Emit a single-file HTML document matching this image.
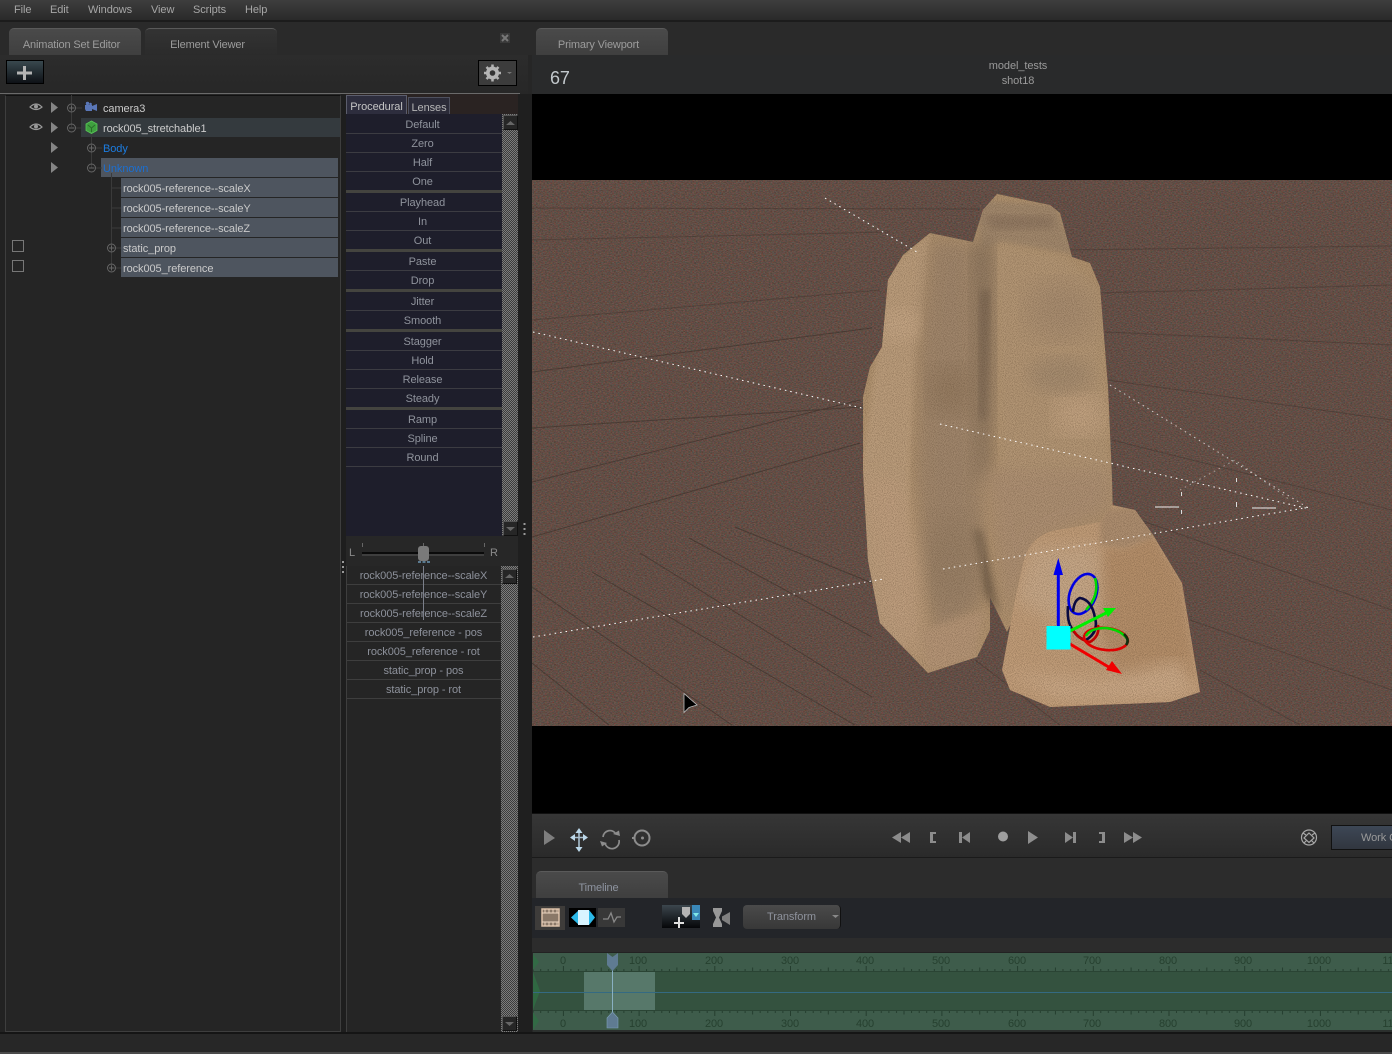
<!DOCTYPE html>
<html>
<head>
<meta charset="utf-8">
<style>
html,body{margin:0;padding:0;background:#252525;}
#p{position:relative;width:1392px;height:1054px;overflow:hidden;background:#262626;font-family:"Liberation Sans",sans-serif;font-size:11px;letter-spacing:-.08px;color:#a0a0a0;}
#p div{position:absolute;}
.t{white-space:nowrap;line-height:14px;height:14px;}
.c{text-align:center;}
.m{color:#a6a6a6;top:2px;}
.tab{border-radius:5px 5px 0 0;background:linear-gradient(#4a4a4a,#3f3f3f);height:27px;width:132px;border-top:1px solid #5a5a5a;box-sizing:border-box;padding-right:7px;text-align:center;line-height:32px;color:#9c9c9c;letter-spacing:-.15px;}
.sel{background:#4e555f;height:19px;}
.tr{color:#cacaca;left:123px;}
.r{left:346px;width:153px;color:#8f939c;text-align:center;line-height:14px;height:14px;}
.sep{left:346px;width:156px;height:1px;background:#3c3c42;}
.gs{left:346px;width:156px;height:3px;background:#44443f;}
.l{left:346px;width:155px;color:#8d919b;text-align:center;line-height:14px;height:14px;}
.ls{left:346px;width:155px;height:1px;background:#3e3e3e;}
.chk{background-color:#5c5c5c;background-image:repeating-conic-gradient(#3b3b3b 0 25%,#7c7c7c 0 50%);background-size:2px 2px;}
.btn{background:#262626;border:1px solid #555;border-right-color:#111;border-bottom-color:#111;box-sizing:border-box;width:15px;height:15px;}
.num{color:#26402f;font-size:11px;width:40px;text-align:center;line-height:12px;height:12px;}
svg{position:absolute;display:block;}
</style>
</head>
<body>
<div id="p">
<!-- menu -->
<div style="left:0;top:0;width:1392px;height:20px;background:linear-gradient(#3e3e3e,#2a2a2a);"></div>
<div style="left:0;top:20px;width:1392px;height:2px;background:#1c1c1c;"></div>
<div class="t m" style="left:14px;top:3px;">File</div>
<div class="t m" style="left:50px;top:3px;">Edit</div>
<div class="t m" style="left:88px;top:3px;">Windows</div>
<div class="t m" style="left:151px;top:3px;">View</div>
<div class="t m" style="left:193px;top:3px;">Scripts</div>
<div class="t m" style="left:245px;top:3px;">Help</div>

<!-- left panel head -->
<div style="left:0;top:22px;width:528px;height:33px;background:#2a2a2a;"></div>
<div style="left:0;top:55px;width:528px;height:39px;background:linear-gradient(#2c2c2c,#272727);"></div>
<div style="left:0;top:93px;width:520px;height:1px;background:#6a6a6a;"></div>
<div class="tab" style="left:9px;top:28px;">Animation Set Editor</div>
<div class="tab" style="left:145px;top:28px;background:linear-gradient(#333,#2b2b2b);">Element Viewer</div>
<svg style="left:500px;top:33px;" width="10" height="10"><rect width="10" height="10" fill="#3a3a3a"/><path d="M2 2L8 8M8 2L2 8" stroke="#777" stroke-width="2"/></svg>
<div style="left:6px;top:60px;width:38px;height:24px;background:linear-gradient(#39484e,#0e1116);border:1px solid #000;box-sizing:border-box;"></div>
<svg style="left:6px;top:60px;" width="38" height="24"><path d="M18.500 6V20M11 13H26" stroke="#b4b4b4" stroke-width="3"/></svg>
<div style="left:478px;top:60px;width:39px;height:26px;background:#3c3c3c;border:1px solid #000;box-sizing:border-box;"></div>
<svg style="left:483px;top:63px;" width="30" height="20"><g fill="#b4b4b4"><circle cx="9.500" cy="10" r="6.500"/><g stroke="#b4b4b4" stroke-width="2.500"><path d="M9.500 1.500V18.500M1 10H18M3.500 4L15.500 16M15.500 4L3.500 16"/></g></g><circle cx="9.500" cy="10" r="2.800" fill="#333"/><path d="M24 9H29L26.500 11Z" fill="#777"/></svg>

<!-- tree panel -->
<div style="left:0;top:94px;width:5px;height:940px;background:#222;"></div>
<div style="left:5px;top:95px;width:336px;height:937px;background:#252525;border:1px solid #3e3e3e;border-top-color:#111;box-sizing:border-box;"></div>
<div style="left:341px;top:94px;width:5px;height:940px;background:#1e1e1e;"></div>
<div style="left:81px;top:118px;width:259px;height:19px;background:#343a3e;"></div>
<div class="sel" style="left:101px;top:158px;width:237px;"></div>
<div class="sel" style="left:121px;top:178px;width:217px;"></div>
<div class="sel" style="left:121px;top:198px;width:217px;"></div>
<div class="sel" style="left:121px;top:218px;width:217px;"></div>
<div class="sel" style="left:121px;top:238px;width:217px;"></div>
<div class="sel" style="left:121px;top:258px;width:217px;"></div>

<svg style="left:0;top:95px;" width="130" height="185">
 <g stroke="#3a3a3a" fill="none">
  <path d="M71.500 0V32M71.500 13H82M71.500 33H82"/>
  <path d="M91.500 38V73M91.500 53H102M91.500 73H102"/>
  <path d="M111.500 78V173M111.500 93H121M111.500 113H121M111.500 133H121M111.500 153H121M111.500 173H121"/>
 </g>
 <g fill="none" stroke="#666">
  <circle cx="71.500" cy="13" r="4"/><path d="M69 13H74M71.500 10.500V15.500"/>
  <circle cx="71.500" cy="33" r="4"/><path d="M69 33H74"/>
  <circle cx="91.500" cy="53" r="4"/><path d="M89 53H94M91.500 50.500V55.500"/>
  <circle cx="91.500" cy="73" r="4"/><path d="M89 73H94"/>
  <circle cx="111.500" cy="153" r="4"/><path d="M109 153H114M111.500 150.500V155.500"/>
  <circle cx="111.500" cy="173" r="4"/><path d="M109 173H114M111.500 170.500V175.500"/>
 </g>
 <g fill="#858585">
  <path d="M51 7L58 12.500L51 18Z"/><path d="M51 27L58 32.500L51 38Z"/><path d="M51 47L58 52.500L51 58Z"/><path d="M51 67L58 72.500L51 78Z"/>
 </g>
 <g>
  <path d="M30 12Q36 6 42 12Q36 17 30 12Z" fill="none" stroke="#999" stroke-width="1.200"/><circle cx="36" cy="11.500" r="2" fill="#999"/>
  <path d="M30 32Q36 26 42 32Q36 37 30 32Z" fill="none" stroke="#999" stroke-width="1.200"/><circle cx="36" cy="31.500" r="2" fill="#999"/>
 </g>
 <rect x="12.500" y="145.500" width="11" height="11" fill="none" stroke="#777"/>
 <rect x="12.500" y="165.500" width="11" height="11" fill="none" stroke="#777"/>
 <path d="M85 10H92V11L97 9V16L92 14V16H86L85 14Z" fill="#5a77b8"/><circle cx="87.500" cy="8.500" r="1.700" fill="#5a77b8"/><circle cx="90.500" cy="9" r="1.300" fill="#5a77b8"/>
 <path d="M91.500 26L97 29V35.500L91.500 38.500L86 35.500V29Z" fill="#3fa03f" stroke="#59c659" stroke-width=".8"/>
 <path d="M88 30L91.500 33L95 30M91.500 33V37" stroke="#2a6e2a" fill="none"/>
</svg>

<div class="t" style="left:103px;top:102px;color:#cacaca;">camera3</div>
<div class="t" style="left:103px;top:122px;color:#cccccc;">rock005_stretchable1</div>
<div class="t" style="left:103px;top:142px;color:#1c7ce0;">Body</div>
<div class="t" style="left:103px;top:162px;color:#1c6fd0;">Unknown</div>
<div class="t tr" style="top:182px;">rock005-reference--scaleX</div>
<div class="t tr" style="top:202px;">rock005-reference--scaleY</div>
<div class="t tr" style="top:222px;">rock005-reference--scaleZ</div>
<div class="t tr" style="top:242px;">static_prop</div>
<div class="t tr" style="top:262px;">rock005_reference</div>

<!-- center panel -->
<div style="left:346px;top:94px;width:172px;height:20px;background:#2a2322;"></div>
<div style="left:346px;top:95px;width:61px;height:19px;background:#2d2d3d;border:1px solid #5b5d6c;border-bottom:0;box-sizing:border-box;line-height:22px;text-align:center;color:#c4c4c4;">Procedural</div>
<div style="left:408px;top:97px;width:42px;height:17px;background:#2b2b38;border:1px solid #4e505e;border-bottom:0;box-sizing:border-box;line-height:20px;text-align:center;color:#b6b6b6;">Lenses</div>
<div style="left:346px;top:114px;width:156px;height:422px;background:#1e1e2b;"></div>
<div class="chk" style="left:502px;top:114px;width:16px;height:422px;"></div>
<div class="btn" style="left:503px;top:115px;"></div>
<svg style="left:505px;top:120px;" width="11" height="6"><path d="M1 5H10L5.500 1Z" fill="#666"/></svg>
<div class="btn" style="left:503px;top:521px;"></div>
<svg style="left:505px;top:526px;" width="11" height="6"><path d="M1 1H10L5.500 5Z" fill="#666"/></svg>

<div class="r" style="top:118px;">Default</div><div class="sep" style="top:133px;"></div>
<div class="r" style="top:137px;">Zero</div><div class="sep" style="top:152px;"></div>
<div class="r" style="top:156px;">Half</div><div class="sep" style="top:171px;"></div>
<div class="r" style="top:175px;">One</div><div class="gs" style="top:190px;"></div>
<div class="r" style="top:196px;">Playhead</div><div class="sep" style="top:211px;"></div>
<div class="r" style="top:215px;">In</div><div class="sep" style="top:230px;"></div>
<div class="r" style="top:234px;">Out</div><div class="gs" style="top:249px;"></div>
<div class="r" style="top:255px;">Paste</div><div class="sep" style="top:270px;"></div>
<div class="r" style="top:274px;">Drop</div><div class="gs" style="top:289px;"></div>
<div class="r" style="top:295px;">Jitter</div><div class="sep" style="top:310px;"></div>
<div class="r" style="top:314px;">Smooth</div><div class="gs" style="top:329px;"></div>
<div class="r" style="top:335px;">Stagger</div><div class="sep" style="top:350px;"></div>
<div class="r" style="top:354px;">Hold</div><div class="sep" style="top:369px;"></div>
<div class="r" style="top:373px;">Release</div><div class="sep" style="top:388px;"></div>
<div class="r" style="top:392px;">Steady</div><div class="gs" style="top:407px;"></div>
<div class="r" style="top:413px;">Ramp</div><div class="sep" style="top:428px;"></div>
<div class="r" style="top:432px;">Spline</div><div class="sep" style="top:447px;"></div>
<div class="r" style="top:451px;">Round</div><div class="sep" style="top:466px;"></div>

<!-- slider -->
<div style="left:346px;top:536px;width:172px;height:30px;background:#272727;"></div>
<div class="t" style="left:349px;top:546px;color:#8a8a8a;">L</div>
<div class="t" style="left:490px;top:546px;color:#8a8a8a;">R</div>
<svg style="left:346px;top:540px;" width="172" height="28">
 <path d="M16.500 3V7M138.500 3V7M77.500 3V7" stroke="#666"/>
 <path d="M16 13H138" stroke="#0a0a0a" stroke-width="2"/><path d="M16 15H138" stroke="#555"/>
 <rect x="72" y="6" width="11" height="15" rx="3" fill="#7a7a7a"/>
 <path d="M72 22H75M76.500 22H79.500M81 22H84" stroke="#5a7a90" stroke-width="2"/>
</svg>
<svg style="left:341px;top:560px;" width="5" height="14"><path d="M2 1V3M2 6V8M2 11V13" stroke="#999" stroke-width="2"/></svg>

<!-- lower list -->
<div style="left:346px;top:566px;width:155px;height:466px;background:#252525;border-left:1px solid #3e3e3e;box-sizing:border-box;"></div>
<div class="chk" style="left:501px;top:566px;width:17px;height:466px;"></div>
<div class="btn" style="left:502px;top:569px;"></div>
<svg style="left:504px;top:573px;" width="11" height="6"><path d="M1 5H10L5.500 1Z" fill="#666"/></svg>
<div class="btn" style="left:502px;top:1016px;"></div>
<svg style="left:504px;top:1021px;" width="11" height="6"><path d="M1 1H10L5.500 5Z" fill="#666"/></svg>
<div class="l" style="top:569px;">rock005-reference--scaleX</div><div class="ls" style="top:584px;"></div>
<div class="l" style="top:588px;">rock005-reference--scaleY</div><div class="ls" style="top:603px;"></div>
<div class="l" style="top:607px;">rock005-reference--scaleZ</div><div class="ls" style="top:622px;"></div>
<div class="l" style="top:626px;">rock005_reference - pos</div><div class="ls" style="top:641px;"></div>
<div class="l" style="top:645px;">rock005_reference - rot</div><div class="ls" style="top:660px;"></div>
<div class="l" style="top:664px;">static_prop - pos</div><div class="ls" style="top:679px;"></div>
<div class="l" style="top:683px;">static_prop - rot</div><div class="ls" style="top:698px;"></div>
<div style="left:423px;top:566px;width:1px;height:54px;background:#7b7f8a;"></div>

<div style="left:518px;top:94px;width:14px;height:940px;background:#1f1f1f;"></div>
<svg style="left:522px;top:522px;" width="5" height="14"><path d="M2.500 1V3M2.500 6V8M2.500 11V13" stroke="#999" stroke-width="2"/></svg>

<!-- viewport header -->
<div style="left:528px;top:22px;width:864px;height:33px;background:#2a2a2a;"></div>
<div style="left:532px;top:55px;width:860px;height:39px;background:#292a2b;"></div>
<div class="tab" style="left:536px;top:28px;">Primary Viewport</div>
<div class="t" style="left:550px;top:68px;font-size:18px;line-height:20px;height:20px;color:#c2c8cc;">67</div>
<div class="t c" style="left:948px;top:59px;width:140px;color:#9a9a9a;">model_tests</div>
<div class="t c" style="left:948px;top:74px;width:140px;color:#9a9a9a;">shot18</div>

<!-- viewport -->
<div style="left:532px;top:94px;width:860px;height:719px;background:#000;"></div>
<svg style="left:532px;top:180px;" width="860" height="546" viewBox="532 180 860 546">
 <defs>
  <filter id="n" x="0" y="0" width="100%" height="100%" color-interpolation-filters="sRGB">
   <feTurbulence type="fractalNoise" baseFrequency="0.55 1.15" numOctaves="2" seed="4"/>
   <feColorMatrix values="1.200 0 0 0 -.3  0 .7 .3 0 -.25  0 .3 .7 0 -.27  0 0 0 0 .3"/>
  </filter>
  <filter id="n2" x="0" y="0" width="100%" height="100%" color-interpolation-filters="sRGB">
   <feTurbulence type="fractalNoise" baseFrequency="1.100" numOctaves="1" seed="9"/>
   <feColorMatrix values="0 0 0 0 .3  0 0 0 0 .22  0 0 0 0 .14  1 0 0 0 -.40"/>
  </filter>
  <filter id="b3"><feGaussianBlur stdDeviation="2.500"/></filter>
  <filter id="b4"><feGaussianBlur stdDeviation="4"/></filter>
  <filter id="b8"><feGaussianBlur stdDeviation="8"/></filter>
  <filter id="b14"><feGaussianBlur stdDeviation="14"/></filter>
  <clipPath id="ca"><path d="M863 470L863 397L870 367L882 347L888 280L903 255L930 233L973 242L983 210L997 194L1050 205L1060 213L1072 257L1090 263L1100 287L1108 387L1112 480L1113 520L1040 560L1007 632L990 597L990 630L977 657L928 673L880 623L868 560Z"/></clipPath>
  <clipPath id="cb"><path d="M1002 670L1015 600L1024 560Q1030 538 1052 531L1075 527L1100 522L1112 505L1135 510L1153 535L1182 583L1200 692L1170 702L1050 707L1010 690Z"/></clipPath>
 </defs>
 <rect x="532" y="180" width="860" height="546" fill="#6b5349"/>
 <rect x="532" y="180" width="860" height="546" filter="url(#n)"/>
 <g stroke="#3a2e28" stroke-width="1" fill="none" opacity=".6">
  <path d="M532 372L872 328M532 428L862 407M532 482L860 400M532 537L860 443M532 587L732 725M532 663L609 725M592 572L855 725M640 553L872 697M689 538L872 637M735 527L872 583"/>
 </g>
 <g stroke="#3a2e28" stroke-width="1" fill="none" opacity=".4">
  <path d="M532 208L980 209M1060 250L1392 246M532 240L890 232M532 320L880 290M1100 293L1392 285M1105 332L1392 345M1108 380L1392 420M1112 440L1392 510M1140 520L1392 610M1190 620L1392 690M1200 670L1300 725M975 660L1060 725"/>
 </g>
 <!-- rock A -->
 <g clip-path="url(#ca)">
  <rect x="850" y="190" width="280" height="490" fill="#b0926f"/>
  <!-- left lit face -->
  <path d="M860 480L888 270L930 233L924 300L917 350L910 480L905 680L860 680Z" fill="#bb9d7c" filter="url(#b3)"/>
  <!-- centre shaded face -->
  <path d="M932 240L973 244L982 400L982 600L935 650L917 480L920 350Z" fill="#a0866c" filter="url(#b8)"/>
  <!-- back block -->
  <path d="M975 200L1055 205L1075 255L1000 243L982 250Z" fill="#a1886d" filter="url(#b3)"/>
  <path d="M985 215L1052 216L1055 228L992 230Z" fill="#907862" filter="url(#b4)"/>
  <!-- right tall rock -->
  <path d="M992 246L1005 243L1065 256L1100 290L1110 480L1050 520L1000 520Z" fill="#b39675" filter="url(#b4)"/>
  <!-- fold -->
  <path d="M970 245L994 240L995 360L990 480L976 480Z" fill="#8f7861" filter="url(#b8)"/>
  <path d="M980 290L990 290L985 420L979 420Z" fill="#7d6753" filter="url(#b4)"/>
  <path d="M972 530L982 530L1000 615L985 595Z" fill="#75604c" filter="url(#b4)"/>
  <ellipse cx="1080" cy="415" rx="26" ry="20" fill="#c6a684" filter="url(#b14)"/>
  <ellipse cx="1060" cy="310" rx="35" ry="30" fill="#a78c6f" filter="url(#b14)"/>
  <ellipse cx="1060" cy="375" rx="32" ry="18" fill="#a68c70" filter="url(#b8)"/>
  <ellipse cx="900" cy="325" rx="20" ry="16" fill="#c4a584" filter="url(#b8)"/>
  <ellipse cx="950" cy="390" rx="22" ry="25" fill="#93795f" filter="url(#b14)"/>
  <ellipse cx="950" cy="560" rx="28" ry="45" fill="#998066" filter="url(#b14)"/>
  <path d="M865 480L885 620L925 672L920 560L900 480Z" fill="#bf9f7f" filter="url(#b8)"/>
  <path d="M920 630L985 610L975 660L928 673Z" fill="#b59577" filter="url(#b4)"/>
  <path d="M985 470L1110 470L1110 510L1040 540L1008 620Z" fill="#ad9073" filter="url(#b8)"/>
  <rect x="850" y="190" width="280" height="490" filter="url(#n2)"/>
 </g>
 <!-- rock B -->
 <g clip-path="url(#cb)">
  <rect x="990" y="500" width="220" height="220" fill="#c19d79"/>
  <path d="M1102 548L1125 549L1153 535L1182 583L1195 680L1120 680L1098 620Z" fill="#b58f6b" filter="url(#b4)"/>
  <path d="M1030 550L1098 545L1102 620L1060 625L1015 600Z" fill="#c7a888" filter="url(#b8)"/>
  <path d="M1100 508L1135 508L1160 535L1125 548L1100 545Z" fill="#ad8e70" filter="url(#b3)"/>
  <path d="M1005 670L1020 680L1060 700L1170 700L1195 690L1180 660L1100 680L1030 675Z" fill="#cba987" filter="url(#b8)"/>
  <rect x="990" y="500" width="220" height="220" filter="url(#n2)"/>
 </g>
 <!-- dotted lines -->
 <g fill="none" stroke="#fff" stroke-width="1" stroke-dasharray="1.500 4">
  <path d="M825 198L917 252"/>
  <path d="M533 332L862 408"/>
  <path d="M940 424L1310 509"/>
  <path d="M1110 385L1310 509" opacity=".7"/>
  <path d="M533 637L884 579"/>
  <path d="M943 569L1310 507"/>
  <path d="M1180 490L1235 460L1290 500" opacity=".45"/>
 </g>
 <path d="M1155 507H1179M1252 508H1276" stroke="#eee" stroke-width="1"/>
 <path d="M1181.500 492V496M1181.500 510V514M1236.500 478V482M1236.500 502V507" stroke="#ddd"/>
 <!-- gizmo -->
 <g fill="none" stroke-width="2.600">
  <ellipse cx="1083" cy="594" rx="13" ry="21" transform="rotate(22 1083 594)" stroke="#0000e0"/>
  <path d="M1095 578Q1100 595 1086 610" stroke="#00d800"/>
  <path d="M1073 612Q1074 600 1080 598Q1092 600 1095 618Q1099 632 1086 640Q1076 638 1070 625Q1067 618 1068 606" stroke="#0a0a40"/>
  <path d="M1072 628Q1078 640 1090 642Q1100 636 1098 625" stroke="#c00000"/>
  <ellipse cx="1106" cy="639" rx="22" ry="11" transform="rotate(6 1106 639)" stroke="#e00000"/>
  <path d="M1086 636Q1090 628 1106 628Q1122 630 1128 640" stroke="#00d800"/>
  <path d="M1124 634Q1130 640 1126 645" stroke="#103010"/>
 </g>
 <path d="M1058.300 628V575" stroke="#0000ee" stroke-width="3"/>
 <path d="M1058.300 558L1063 575H1053.500Z" fill="#0000ee"/>
 <path d="M1070 644L1112 669" stroke="#f00000" stroke-width="3"/>
 <path d="M1122 674L1106 670L1112 661Z" fill="#f00000"/>
 <path d="M1070 631L1108 612" stroke="#00f000" stroke-width="3"/>
 <path d="M1116 608L1108 617L1103 608Z" fill="#00f000"/>
 <rect x="1046.500" y="626" width="24" height="23.500" fill="#00ffff"/>
 <!-- cursor -->
 <path d="M684 693.500V712.500L689 707.500L697 705Z" fill="#000" stroke="#bbb" stroke-width=".8"/>
</svg>

<!-- viewport toolbar -->
<div style="left:532px;top:813px;width:860px;height:1px;background:#111;"></div>
<div style="left:532px;top:814px;width:860px;height:44px;background:linear-gradient(#363636,#2a2a2a);"></div>
<div style="left:532px;top:857px;width:860px;height:1px;background:#1a1a1a;"></div>
<div style="left:532px;top:858px;width:860px;height:40px;background:#2c2c2c;"></div>
<svg style="left:532px;top:814px;" width="860" height="44">
 <path d="M12 16L23 24L12 31Z" fill="#7e7e7e"/>
 <g fill="none" stroke="#a8bfcf" stroke-width="1.600"><path d="M47 17V35M39 23.500H55"/></g>
 <g fill="#bcd8ea"><path d="M47 14L50.500 19H43.500Z"/><path d="M47 38L50.500 33H43.500Z"/><path d="M38 23.500L43 20V27Z"/><path d="M56 23.500L51 20V27Z"/></g>
 <g fill="none" stroke="#8c8c8c" stroke-width="1.700"><path d="M71 23A7 7 0 0 1 84 20"/><path d="M87 26A7 7 0 0 1 73 29"/></g>
 <path d="M81 20L88 22L87 16.500Z" fill="#8c8c8c"/><path d="M75 29L68 27L70 32.500Z" fill="#8c8c8c"/>
 <circle cx="110" cy="24" r="7.500" fill="none" stroke="#8c8c8c" stroke-width="2"/><circle cx="110.500" cy="24" r="1.500" fill="#8c8c8c"/><path d="M100 24H103" stroke="#8c8c8c" stroke-width="2"/>
 <g fill="#8c8c8c">
  <path d="M369 18L360 23.500L369 29Z"/><path d="M378 18L369 23.500L378 29Z"/>
  <path d="M398 18H404V20H401V27H404V29H398Z"/>
  <rect x="427" y="18" width="3" height="11"/><path d="M438 18L430 23.500L438 29Z"/>
  <circle cx="471" cy="22.500" r="5" fill="#9e9e9e"/>
  <path d="M496 17L506 23.500L496 30Z" fill="#8e8e8e"/>
  <path d="M533 18L541 23.500L533 29Z"/><rect x="541" y="18" width="3" height="11"/>
  <path d="M567 18H573V29H567V27H570V20H567Z"/>
  <path d="M592 18L601 23.500L592 29Z"/><path d="M601 18L610 23.500L601 29Z"/>
 </g>
 <g fill="none" stroke="#a8a8a8" stroke-width="1.200"><circle cx="777" cy="23.500" r="7.500"/><path d="M777 19L782 24L777 28.500L772 24ZM771 19L774 21M783 19L780 21M772 29L775 26M782 29L779 26"/></g>
</svg>
<div style="left:1331px;top:825px;width:61px;height:25px;background:linear-gradient(#3d4756,#31363f);border:1px solid #111;border-right:0;box-sizing:border-box;"></div>
<div class="t" style="left:1361px;top:831px;color:#9a9a9a;">Work C</div>

<!-- timeline tab -->
<div class="tab" style="left:536px;top:871px;line-height:33px;color:#8e94a0;">Timeline</div>
<div style="left:532px;top:898px;width:860px;height:40px;background:#232529;"></div>
<div style="left:532px;top:938px;width:860px;height:15px;background:#2c2c2c;"></div>
<svg style="left:532px;top:898px;" width="320" height="40">
 <rect x="3" y="8" width="30" height="24" fill="#3e3c3a"/>
 <rect x="10" y="11" width="17" height="17" fill="#8a7868" stroke="#dcc0a8" stroke-width="1.500"/>
 <path d="M10 15H27M10 24H27" stroke="#eed8c4" stroke-width="1"/>
 <path d="M13 11V15M17 11V15M21 11V15M25 11V15M13 24V28M17 24V28M21 24V28M25 24V28" stroke="#e8d0ba"/>
 <rect x="37" y="10" width="27" height="19" fill="#000"/>
 <path d="M39 19.500L47 12H57L63 19.500L57 27H47Z" fill="#2bb8e8"/>
 <rect x="46" y="12" width="11" height="15" fill="#d8f4ff"/>
 <rect x="66" y="10" width="27" height="19" fill="#383838"/>
 <path d="M71 21L76 21L79 15L82 24L85 19H89" fill="none" stroke="#888" stroke-width="1.300"/>
 <defs><linearGradient id="kg" x1="0" y1="0" x2="0" y2="1"><stop offset="0" stop-color="#3c464d"/><stop offset="1" stop-color="#050608"/></linearGradient></defs>
 <rect x="130" y="7" width="38" height="23" fill="url(#kg)"/>
 <path d="M147 19V30M142 25H152" stroke="#e0e0e0" stroke-width="2"/>
 <path d="M150 9H158V16L154 20L150 16Z" fill="#b4b4b4"/>
 <rect x="160" y="7" width="8" height="15" fill="#3a88b8"/><path d="M161 15H167L164 19Z" fill="#7fe8e8"/>
 <path d="M181 10H190V13L187 19.500L190 26V29H181V26L184 19.500L181 13Z" fill="#989898"/>
 <path d="M190 18.500L198 14V27L190 22Z" fill="#808080"/>
</svg>
<div style="left:743px;top:905px;width:98px;height:24px;border-radius:4px;background:linear-gradient(#4a4a4a,#383838);border-right:1px solid #111;box-sizing:border-box;text-align:center;line-height:25px;color:#8e929c;"><span style="position:relative;left:0;">Transform</span></div>
<svg style="left:831px;top:914px;" width="9" height="6"><path d="M1 1H8L4.500 4Z" fill="#888"/></svg>

<!-- timeline -->
<svg style="left:532px;top:952px;" width="860" height="82">
 <defs>
  <pattern id="tk" x="30.900" y="14" width="75.700" height="6" patternUnits="userSpaceOnUse">
   <path stroke="#243d2e" stroke-width="1" d="M.5 0V6M8 3V6M15.600 3V6M23.200 3V6M30.800 3V6M38.300 1.500V6M45.900 3V6M53.500 3V6M61 3V6M68.600 3V6"/>
  </pattern>
  <pattern id="tk2" x="30.900" y="58" width="75.700" height="6" patternUnits="userSpaceOnUse">
   <path stroke="#243d2e" stroke-width="1" d="M.5 0V6M8 0V3M15.600 0V3M23.200 0V3M30.800 0V3M38.300 0V4.500M45.900 0V3M53.500 0V3M61 0V3M68.600 0V3"/>
  </pattern>
 </defs>
 <rect x="0" y="0" width="860" height="1" fill="#222"/>
 <rect x="1" y="1" width="859" height="77" fill="#3e5c4b"/>
 <rect x="1" y="19" width="859" height="39" fill="#34523f"/>
 <rect x="1" y="78" width="859" height="2" fill="#2b2f2d"/>
 <rect x="0" y="81" width="860" height="1" fill="#111"/>
 <rect x="1" y="14" width="859" height="6" fill="url(#tk)"/>
 <rect x="1" y="58" width="859" height="6" fill="url(#tk2)"/>
 <path d="M1 19.500H860M1 58.500H860" stroke="#2a4434" stroke-width="1"/>
 <path d="M1 2L7 10L1 18ZM1 20L8 39L1 58ZM1 60L7 69L1 78Z" fill="#2f6e43" opacity=".8"/>
 <rect x="52" y="20" width="71" height="38" fill="#57786a"/>
 <path d="M1 40.500H860" stroke="#346a82" stroke-width="1"/>
 <path d="M80.500 8V70" stroke="#89b0c2" stroke-width="1"/>
 <path d="M75 1L80.500 5L86 1V13L80.500 19L75 13Z" fill="#5f7b92"/>
 <path d="M75 66L80.500 60L86 66V76H75Z" fill="#5f7b92" stroke="#7ea0b8" stroke-width=".6"/>
</svg>
<div class="num" style="left:543px;top:955px;">0</div><div class="num" style="left:618px;top:955px;">100</div><div class="num" style="left:694px;top:955px;">200</div><div class="num" style="left:770px;top:955px;">300</div><div class="num" style="left:845px;top:955px;">400</div><div class="num" style="left:921px;top:955px;">500</div><div class="num" style="left:997px;top:955px;">600</div><div class="num" style="left:1072px;top:955px;">700</div><div class="num" style="left:1148px;top:955px;">800</div><div class="num" style="left:1223px;top:955px;">900</div><div class="num" style="left:1299px;top:955px;">1000</div><div class="num" style="left:1374px;top:955px;">1100</div>
<div class="num" style="left:543px;top:1018px;">0</div><div class="num" style="left:618px;top:1018px;">100</div><div class="num" style="left:694px;top:1018px;">200</div><div class="num" style="left:770px;top:1018px;">300</div><div class="num" style="left:845px;top:1018px;">400</div><div class="num" style="left:921px;top:1018px;">500</div><div class="num" style="left:997px;top:1018px;">600</div><div class="num" style="left:1072px;top:1018px;">700</div><div class="num" style="left:1148px;top:1018px;">800</div><div class="num" style="left:1223px;top:1018px;">900</div><div class="num" style="left:1299px;top:1018px;">1000</div><div class="num" style="left:1374px;top:1018px;">1100</div>

<!-- bottom -->
<div style="left:0;top:1032px;width:1392px;height:2px;background:#151515;"></div>
<div style="left:0;top:1034px;width:1392px;height:18px;background:#272727;"></div>
<div style="left:0;top:1052px;width:1392px;height:2px;background:#4a4a4a;"></div>
</div>
</body>
</html>
